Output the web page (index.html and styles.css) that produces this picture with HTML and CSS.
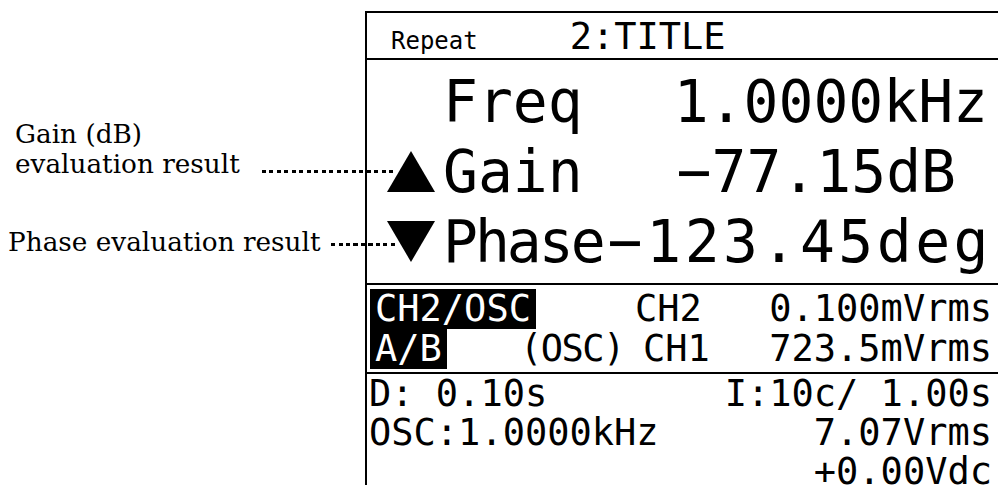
FILE: index.html
```
<!DOCTYPE html>
<html lang="en">

<head>
    <meta charset="UTF-8">
    <title>Evaluation display</title>
    <link rel="stylesheet" href="styles.css">
</head>

<body>
    <div class="page">
        <div class="notes">
            <div class="note note-gain">
                <div>Gain (dB)</div>
                <div class="note-line"><span>evaluation result</span><i class="leader"></i></div>
            </div>
            <div class="note note-phase">
                <div class="note-line"><span>Phase evaluation result</span><i class="leader"></i></div>
            </div>
        </div>

        <div class="panel">
            <div class="panel-head">
                <span class="mode">Repeat</span>
                <span class="title">2:TITLE</span>
            </div>

            <div class="readout">
                <div class="big-row freq">
                    <span class="mark"></span>
                    <span class="label">Freq</span>
                    <span class="value">1.0000kHz</span>
                </div>
                <div class="big-row gain">
                    <span class="mark"><svg class="tri" width="48" height="41" viewBox="0 0 48 41"><path d="M24 0 L48 41 H0 Z" /></svg></span>
                    <span class="label">Gain</span>
                    <span class="value">&minus;77.15dB</span>
                </div>
                <div class="big-row phase">
                    <span class="mark"><svg class="tri" width="48" height="41" viewBox="0 0 48 41"><path d="M0 0 H48 L24 41 Z" /></svg></span>
                    <span class="label">Phase</span>
                    <span class="value">&minus;123.45deg</span>
                </div>
            </div>

            <div class="channels">
                <div class="chan-row">
                    <span class="tag">CH2/OSC</span>
                    <span></span>
                    <span class="ch">CH2</span>
                    <span class="value">0.100mVrms</span>
                </div>
                <div class="chan-row">
                    <span class="tag">A/B</span>
                    <span class="src">(OSC)</span>
                    <span class="ch ch-ref">CH1</span>
                    <span class="value">723.5mVrms</span>
                </div>
            </div>

            <div class="settings">
                <div class="set-row">
                    <span>D: 0.10s</span>
                    <span>I:10c/ 1.00s</span>
                </div>
                <div class="set-row">
                    <span>OSC:1.0000kHz</span>
                    <span>7.07Vrms</span>
                </div>
                <div class="set-row">
                    <span class="right">+0.00Vdc</span>
                </div>
            </div>
        </div>
    </div>
</body>

</html>
```

FILE: styles.css
```
html,
body {
    margin: 0;
    height: 100%;
    overflow: hidden;
    background-color: #fff;
    color: #000;
}

.page {
    display: flex;
    min-height: 100%;
}

/* callouts on the left */

.notes {
    width: 365px;
    flex: none;
    padding-top: 119px;
    font: 26.3px/30px "DejaVu Serif", serif;
    white-space: nowrap;
}

.note-gain {
    padding-left: 15px;
}

.note-phase {
    padding-left: 8px;
    margin-top: 48px;
}

.note-line {
    display: flex;
    align-items: flex-end;
}

.leader {
    flex: 1;
    height: 3px;
    position: relative;
    z-index: 1;
    background: repeating-linear-gradient(to right, #000 0 4px, transparent 4px 7.5px);
}

.note-gain .leader {
    margin: 0 -30px 6px 22px;
}

.note-phase .leader {
    margin: 0 -32px 11px 10px;
}

/* instrument screen */

.panel {
    flex: 1;
    margin-top: 11px;
    border-top: 2px solid #000;
    border-left: 2px solid #000;
    font-family: "DejaVu Sans Mono", monospace;
    white-space: nowrap;
}

.panel-head {
    display: flex;
    align-items: baseline;
    height: 43px;
    padding: 2px 0 0 24px;
    line-height: 44px;
    border-bottom: 2px solid #000;
}

.mode {
    font-size: 24px;
}

.title {
    font-size: 37px;
    margin-left: 92px;
}

.readout {
    padding: 7px 10px 6px 20px;
    font-size: 58px;
    line-height: 70px;
    border-bottom: 2px solid #000;
}

.big-row {
    display: flex;
    align-items: baseline;
    height: 70px;
}

.mark {
    width: 56px;
    flex: none;
}

.big-row .value {
    margin-left: auto;
}

.gain .value {
    margin-right: 32px;
}

.phase .label {
    letter-spacing: -3px;
}

.phase .value {
    letter-spacing: 3.5px;
    margin-right: -4px;
}

.channels {
    padding: 4px 6px 3px 3px;
    font-size: 37px;
    line-height: 40px;
    border-bottom: 2px solid #000;
}

.chan-row {
    display: grid;
    grid-template-columns: 150px 115px 1fr auto;
    height: 40px;
}

.tag {
    justify-self: start;
    padding: 0 5px;
    background-color: #000;
    color: #fff;
}

.src {
    letter-spacing: -1.5px;
}

.ch-ref {
    margin-left: 8px;
}

.settings {
    padding: 0 6px 0 2px;
    font-size: 37px;
    line-height: 39px;
}

.set-row {
    display: flex;
    justify-content: space-between;
}

.right {
    margin-left: auto;
}
```
